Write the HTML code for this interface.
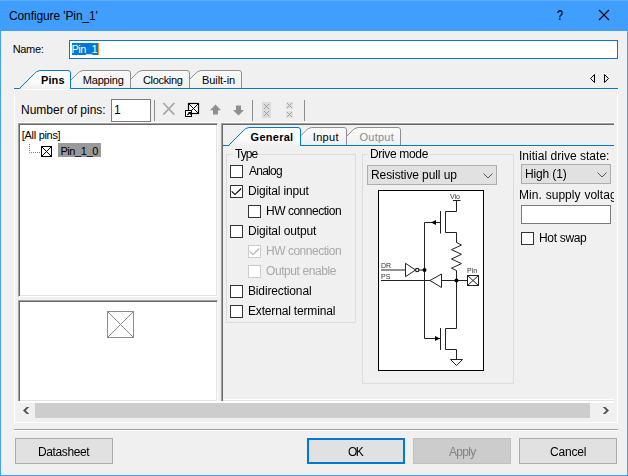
<!DOCTYPE html>
<html>
<head>
<meta charset="utf-8">
<title>Configure 'Pin_1'</title>
<style>
html,body{margin:0;padding:0;}
body{width:628px;height:476px;overflow:hidden;background:#f0f0f0;position:relative;
  font-family:"Liberation Sans",sans-serif;font-size:12px;color:#000;}
.a{position:absolute;}
.t{position:absolute;white-space:nowrap;line-height:16px;height:16px;}
.g{will-change:transform;}
#win{left:0;top:0;width:626px;height:474px;border:1px solid #409eff;background:#f0f0f0;}
#title{left:0;top:0;width:628px;height:31px;background:#409eff;}
.btn{position:absolute;box-sizing:border-box;width:98px;height:26px;top:438px;background:#e1e1e1;border:1px solid #adadad;}
.btn .t{top:4px;}
.cb{position:absolute;box-sizing:border-box;width:13px;height:13px;border:1px solid #333;background:#fff;}
.cb.dis{border-color:#ccc;background:#fff;}
.combo{position:absolute;box-sizing:border-box;background:#e1e1e1;border:1px solid #adadad;}
.grp{position:absolute;box-sizing:border-box;border:1px solid #dcdcdc;}
.sunk{position:absolute;box-sizing:border-box;border:1px solid;border-color:#a0a0a0 #fff #fff #a0a0a0;box-shadow:inset 1px 1px 0 #696969, inset -1px -1px 0 #e3e3e3;}
</style>
</head>
<body>
<div class="a" id="win"></div>
<div class="a" id="title"></div>
<div class="a" style="left:0;top:0;width:628px;height:1px;background:#5cacff;"></div>
<div class="t" id="ttl" style="left:9px;top:8px;font-size:12px;letter-spacing:-0.11px;">Configure 'Pin_1'</div>
<div class="t" id="qm" style="left:556.6px;top:7px;font-size:15px;transform:scaleX(0.72);transform-origin:0 0;-webkit-text-stroke:0.2px #000;">?</div>
<svg class="a" style="left:598px;top:9px" width="12" height="12" viewBox="0 0 12 12"><path d="M1 1 L11 11 M11 1 L1 11" stroke="#000" stroke-width="1.1" fill="none"/></svg>
<div class="t" id="namel" style="left:12.7px;top:41px;font-size:11px;letter-spacing:-0.33px;">Name:</div>
<div class="a" style="left:69px;top:40px;width:547px;height:17px;border:1px solid #0078d7;background:#fff;"></div>
<div class="a" style="left:72px;top:43px;width:26px;height:12px;background:#0078d7;"></div>
<div class="a" style="left:98px;top:43px;width:1px;height:12px;background:#ff8729;"></div>
<div class="t" id="namev" style="left:71.5px;top:41px;font-size:11px;letter-spacing:-0.5px;color:#fff;">Pin_1</div>
<div class="a" id="mainpanel" style="left:14px;top:89px;width:603px;height:333px;border:1px solid #fff;box-sizing:border-box;width:604px;height:334px;"></div>
<svg class="a" id="maintabs" style="left:0;top:60px" width="628" height="32" viewBox="0 60 628 32">
<defs><linearGradient id="tg" x1="0" y1="0" x2="0" y2="1"><stop offset="0" stop-color="#fafafa"/><stop offset="1" stop-color="#f0f0f0"/></linearGradient>
<linearGradient id="tgs" x1="0" y1="0" x2="0" y2="1"><stop offset="0" stop-color="#ffffff"/><stop offset="0.7" stop-color="#fbfbfb"/><stop offset="1" stop-color="#f0f0f0"/></linearGradient></defs>
<path d="M180.5 88.5 L195.5 73.5 Q197.0 71.3 201.0 70.5 L239.0 70.5 Q241.5 70.5 241.5 73.0 L241.5 88.5" fill="url(#tg)" stroke="#8e8e8e" stroke-width="1"/>
<path d="M121.5 88.5 L136.5 73.5 Q138.0 71.3 142.0 70.5 L187.0 70.5 Q189.5 70.5 189.5 73.0 L189.5 88.5" fill="url(#tg)" stroke="#8e8e8e" stroke-width="1"/>
<path d="M62.5 88.5 L77.5 73.5 Q79.0 71.3 83.0 70.5 L128.0 70.5 Q130.5 70.5 130.5 73.0 L130.5 88.5" fill="url(#tg)" stroke="#8e8e8e" stroke-width="1"/>
<path d="M14 88.5 L618 88.5" stroke="#0078d7" stroke-width="1" fill="none"/>
<path d="M19.5 88.5 L34.5 73.5 Q36.0 71.3 40.0 70.5 L68.0 70.5 Q70.5 70.5 70.5 73.0 L70.5 88.5" fill="url(#tgs)" stroke="#0078d7" stroke-width="1"/>
<path d="M20.5 88.5 L70 88.5" stroke="#f0f0f0" stroke-width="1"/>
<path d="M594.5 74.5 L594.5 82.5 L590.5 78.5 Z" fill="none" stroke="#000" stroke-width="1"/>
<path d="M604.5 74.5 L604.5 82.5 L608.5 78.5 Z" fill="none" stroke="#000" stroke-width="1"/>
</svg>
<div class="t" id="tb1" style="left:41px;top:72px;font-size:11px;letter-spacing:0.1px;font-weight:bold;">Pins</div>
<div class="t" id="tb2" style="left:82.8px;top:72px;font-size:11px;letter-spacing:-0.2px;">Mapping</div>
<div class="t" id="tb3" style="left:143px;top:72px;font-size:11px;letter-spacing:-0.34px;">Clocking</div>
<div class="t" id="tb4" style="left:202px;top:72px;font-size:11px;letter-spacing:-0.07px;">Built-in</div>
<div class="t" id="nop" style="left:21px;top:102px;font-size:12px;">Number of pins:</div>
<div class="a" style="left:111px;top:99px;width:38px;height:21px;border:1px solid #7a7a7a;background:#fff;"></div>
<div class="t" id="nopv" style="left:114px;top:102px;font-size:12px;">1</div>
<svg class="a" id="toolbar" style="left:152px;top:96px" width="160" height="28" viewBox="152 96 160 28">
  <path d="M154.5 100 V121 M252.5 100 V121 M304.5 100 V121" stroke="#8c8c8c" stroke-width="1"/>
  <path d="M163.3 103 L174.3 114.6 M174.3 103 L163.3 114.6" stroke="#a6a6a6" stroke-width="1.7" fill="none"/>
  <rect x="188.5" y="103.500" width="10" height="10" fill="#fff" stroke="#000" stroke-width="1.2"/>
  <path d="M188.5 103.5 L198.5 113.5 M198.5 103.5 L188.5 113.5" stroke="#000" stroke-width="1"/>
  <rect x="185.5" y="110.500" width="6" height="6" fill="#fff" stroke="#000"/>
  <path d="M187.3 115.2 L189.5 113" stroke="#000" stroke-width="1.2" fill="none"/><path d="M187.8 112 H191 V115.200 Z" fill="#000"/>
  <path d="M215.5 104.500 L221 110.300 H218 V114.600 H213 V110.300 H210 Z" fill="#8f8f8f"/>
  <path d="M238.5 115.400 L244 110 H241 V105.500 H236 V110 H233 Z" fill="#8f8f8f"/>
  <rect x="262" y="102" width="9" height="16" fill="#dcdcdc"/>
  <g stroke="#a0a0a0" stroke-width="1" fill="none">
    <path d="M264 104 L269 109 M269 104 L264 109"/>
    <path d="M264 111 L269 116 M269 111 L264 116"/>
  </g>
  <rect x="286" y="102" width="7" height="7" fill="#e2e2e2"/>
  <rect x="286" y="111" width="7" height="7" fill="#e2e2e2"/>
  <g stroke="#a0a0a0" stroke-width="1" fill="none">
    <path d="M287 103 L292 108 M292 103 L287 108"/>
    <path d="M287 112 L292 117 M292 112 L287 117"/>
  </g>
</svg>
<div class="a" style="left:15px;top:122px;width:600px;height:1px;background:#fff;"></div>
<div class="sunk" style="left:18px;top:123px;width:200px;height:174px;background:#fff;"></div>
<div class="t" id="allp" style="left:21.8px;top:126.5px;font-size:11px;letter-spacing:-0.3px;">[All pins]</div>
<svg class="a" style="left:28px;top:142px" width="26" height="17" viewBox="28 142 26 17">
  <path d="M29.5 144 V152.500 H40" stroke="#808080" stroke-width="1" stroke-dasharray="1 1" fill="none"/>
  <rect x="41.500" y="146.500" width="10" height="10" fill="#fff" stroke="#000"/>
  <path d="M41.500 146.500 L51.500 156.500 M51.500 146.500 L41.500 156.500" stroke="#000" stroke-width="1"/>
</svg>
<div class="a" style="left:58px;top:143px;width:43px;height:14px;background:#999;"></div>
<div class="t" id="pin10" style="left:60.4px;top:143px;font-size:11px;letter-spacing:-0.4px;">Pin_1_0</div>
<div class="sunk" style="left:18px;top:300px;width:200px;height:102px;background:#fff;"></div>
<svg class="a" style="left:105px;top:309px" width="32" height="32" viewBox="105 309 32 32">
  <rect x="107.500" y="311.500" width="26" height="26" fill="#fff" stroke="#8c8c8c"/>
  <path d="M107.500 311.500 L133.500 337.500 M133.500 311.500 L107.500 337.500" stroke="#8c8c8c" stroke-width="1"/>
</svg>
<div class="sunk" id="rpanel" style="left:221px;top:123px;width:393px;height:279px;border-right:none;box-shadow:inset 1px 1px 0 #696969, inset 0 -1px 0 #e3e3e3;"></div>
<div class="a" style="left:223px;top:399px;width:391px;height:1px;background:#fff;"></div>
<svg class="a" id="rtabs" style="left:223px;top:125px" width="392" height="23" viewBox="223 125 392 23">
<path d="M337.5 145.5 L352.5 130.5 Q354.0 128.3 358.0 127.5 L398.0 127.5 Q400.5 127.5 400.5 130.0 L400.5 145.5" fill="url(#tg)" stroke="#8e8e8e" stroke-width="1"/>
<path d="M291 145.5 L306.0 130.5 Q307.5 128.3 311.5 127.5 L344.0 127.5 Q346.5 127.5 346.5 130.0 L346.5 145.5" fill="url(#tg)" stroke="#8e8e8e" stroke-width="1"/>
<path d="M223 145.500 L614 145.500" stroke="#0078d7" stroke-width="1" fill="none"/>
<path d="M228.5 145.5 L243.5 130.5 Q245.0 128.3 249.0 127.5 L298.0 127.5 Q300.5 127.5 300.5 130.0 L300.5 145.5" fill="url(#tgs)" stroke="#0078d7" stroke-width="1"/>
<path d="M229.500 145.500 L300 145.500" stroke="#f0f0f0" stroke-width="1"/>
</svg>
<div class="t" id="rt1" style="left:250.6px;top:129px;font-size:11px;letter-spacing:0.27px;font-weight:bold;">General</div>
<div class="t" id="rt2" style="left:312.8px;top:129px;font-size:11px;letter-spacing:0.31px;">Input</div>
<div class="t" id="rt3" style="left:359.5px;top:129px;font-size:11px;letter-spacing:0.25px;color:#8c8c8c;">Output</div>
<div class="grp" style="left:226px;top:154px;width:130px;height:169px;"></div>
<div class="t g" id="gtype" style="left:232.7px;top:146px;font-size:12px;letter-spacing:-0.97px;background:#f0f0f0;padding:0 1px 0 2px;">Type</div>
<div class="cb" style="left:230px;top:165px;"></div>
<div class="t g" id="c_an" style="left:248.8px;top:163px;font-size:12px;letter-spacing:-0.75px;">Analog</div>
<div class="cb" style="left:230px;top:185px;"></div>
<svg class="a" style="left:230px;top:185px" width="13" height="13"><path d="M1.700 6.300 L5 9.600 L11.200 3.500" stroke="#000" stroke-width="1.100" fill="none"/></svg>
<div class="t g" id="c_di" style="left:247.8px;top:183px;font-size:12px;letter-spacing:-0.15px;">Digital input</div>
<div class="cb" style="left:248px;top:205px;"></div>
<div class="t g" id="c_hw" style="left:265.8px;top:203px;font-size:12px;letter-spacing:-0.48px;">HW connection</div>
<div class="cb" style="left:230px;top:225px;"></div>
<div class="t g" id="c_do" style="left:247.8px;top:223px;font-size:12px;letter-spacing:-0.13px;">Digital output</div>
<div class="cb dis" style="left:248px;top:245px;"></div>
<svg class="a" style="left:248px;top:245px" width="13" height="13"><path d="M1.700 6.300 L5 9.600 L11.200 3.500" stroke="#b0b0b0" stroke-width="1.100" fill="none"/></svg>
<div class="t g" id="c_hw2" style="left:265.8px;top:243px;font-size:12px;letter-spacing:-0.48px;color:#a8a8a8;">HW connection</div>
<div class="cb dis" style="left:248px;top:265px;"></div>
<div class="t g" id="c_oe" style="left:266px;top:263px;font-size:12px;letter-spacing:-0.42px;color:#a8a8a8;">Output enable</div>
<div class="cb" style="left:230px;top:285px;"></div>
<div class="t g" id="c_bi" style="left:247.8px;top:283px;font-size:12px;letter-spacing:-0.15px;">Bidirectional</div>
<div class="cb" style="left:230px;top:305px;"></div>
<div class="t g" id="c_et" style="left:247.8px;top:303px;font-size:12px;letter-spacing:-0.17px;">External terminal</div>
<div class="grp" style="left:362px;top:154px;width:152px;height:230px;"></div>
<div class="t g" id="gdrive" style="left:367.5px;top:146px;font-size:12px;letter-spacing:-0.33px;background:#f0f0f0;padding:0 1px 0 2px;">Drive mode</div>
<div class="combo" style="left:367px;top:165px;width:130px;height:20px;"></div>
<div class="t g" id="rpu" style="left:370.5px;top:167px;font-size:12px;letter-spacing:-0.09px;">Resistive pull up</div>
<svg class="a" style="left:482px;top:171px" width="12" height="9" viewBox="0 0 12 9"><path d="M1.500 2.500 L6 7 L10.500 2.500" stroke="#555" stroke-width="1" fill="none"/></svg>
<svg class="a g" id="schem" style="left:377px;top:189px" width="108" height="183" viewBox="377 189 108 183">
  <rect x="378.500" y="190.500" width="105" height="180" fill="#fff" stroke="#000" stroke-width="1"/>
  <g stroke="#222" stroke-width="1" fill="none">
    <path d="M453 200.500 H460.500"/>
    <path d="M456.500 200.500 V211.500 H445.500 V232.500 H456.500 V242.5 L461.5 245 L451.5 249.7 L461.5 254.3 L451.5 259 L461.5 263.6 L451.5 268.2 L456.500 270.500 V328.500 H445.500 V349.500 H456.500 V359.500"/>
    <path d="M440.500 211 V233.500"/>
    <path d="M440.500 222.500 H424.500 V338.500 H440"/>
    <path d="M440.500 328 V350"/>
    <path d="M381 270 H405.500 M418.500 270 H424.500"/>
    <path d="M405.500 263.300 V276.700 L415.500 270 Z" fill="#fff"/>
    <circle cx="417.200" cy="270" r="1.700" fill="#fff" stroke-width="1.2"/>
    <path d="M381 280.500 H430 M441.500 280.500 H467.500"/>
    <path d="M441.500 274 V287.500 L430 280.500 Z" fill="#fff"/>
    <rect x="467.500" y="275.500" width="11" height="10" fill="#fff"/>
    <path d="M467.500 275.500 L478.500 285.500 M478.500 275.500 L467.500 285.500"/>
    <path d="M450.500 359.500 H462.500 L456.500 365.500 Z" fill="#fff"/>
  </g>
  <path d="M431 222.500 L436 220 V225 Z" fill="#000"/>
  <path d="M440 338.500 L435 336 V341 Z" fill="#000"/>
  <circle cx="424.500" cy="270" r="2" fill="#000"/>
  <circle cx="456.500" cy="280.500" r="2" fill="#000"/>
  <g font-family="Liberation Sans, sans-serif" font-size="7" fill="#333">
    <text x="450" y="198.500">Vio</text>
    <text x="381" y="267.500">DR</text>
    <text x="381" y="278.500">PS</text>
    <text x="467" y="273">Pin</text>
  </g>
</svg>
<div class="a" style="left:516px;top:147px;width:98px;height:110px;overflow:hidden;">
<div class="t g" id="ids" style="left:3px;top:1px;font-size:12px;letter-spacing:0.02px;">Initial drive state:</div>
<div class="t g" id="msv" style="left:3px;top:40px;font-size:12px;letter-spacing:0.03px;word-spacing:0.5px;">Min. supply voltage:</div>
</div>
<div class="combo" style="left:521px;top:164px;width:90px;height:20px;"></div>
<div class="t g" id="hi1" style="left:524.5px;top:166px;font-size:12px;letter-spacing:-0.14px;">High (1)</div>
<svg class="a" style="left:596px;top:170px" width="12" height="9" viewBox="0 0 12 9"><path d="M1.500 2.500 L6 7 L10.500 2.500" stroke="#555" stroke-width="1" fill="none"/></svg>
<div class="a" style="left:521px;top:205px;width:88px;height:17px;border:1px solid #7a7a7a;background:#fff;"></div>
<div class="cb" style="left:521px;top:232px;"></div>
<div class="t g" id="hs" style="left:538.8px;top:230px;font-size:12px;letter-spacing:-0.32px;">Hot swap</div>
<div class="a" style="left:18px;top:401px;width:596px;height:2px;background:#fff;"></div>
<div class="a" style="left:35px;top:403px;width:555px;height:15px;background:#cdcdcd;"></div>
<svg class="a" style="left:15px;top:402px" width="602" height="17" viewBox="15 402 602 17">
  <path d="M29.2 407 L26.700 407 L23 410.500 L26.700 414 L29.2 414 L25.700 410.500 Z" fill="#505050"/>
  <path d="M602.800 407 L605.300 407 L609 410.500 L605.300 414 L602.800 414 L606.300 410.500 Z" fill="#505050"/>
</svg>
<div class="a" style="left:14px;top:429px;width:604px;height:1px;background:#a0a0a0;"></div>
<div class="a" style="left:14px;top:430px;width:604px;height:1px;background:#fff;"></div>
<div class="btn" style="left:15px;"><div class="t g" id="b_ds" style="left:22px;top:5px;letter-spacing:-0.38px;">Datasheet</div></div>
<div class="btn" style="left:307px;border:2px solid #0078d7;"><div class="t g" id="b_ok" style="left:39px;top:4px;letter-spacing:-1.5px;">OK</div></div>
<div class="btn" style="left:413px;background:#cccccc;border-color:#bfbfbf;"><div class="t g" id="b_ap" style="left:34.80000000000001px;top:5px;letter-spacing:-0.7px;color:#838383;">Apply</div></div>
<div class="btn" style="left:519px;"><div class="t g" id="b_ca" style="left:29.600000000000023px;top:5px;letter-spacing:-0.2px;">Cancel</div></div>
</body>
</html>
